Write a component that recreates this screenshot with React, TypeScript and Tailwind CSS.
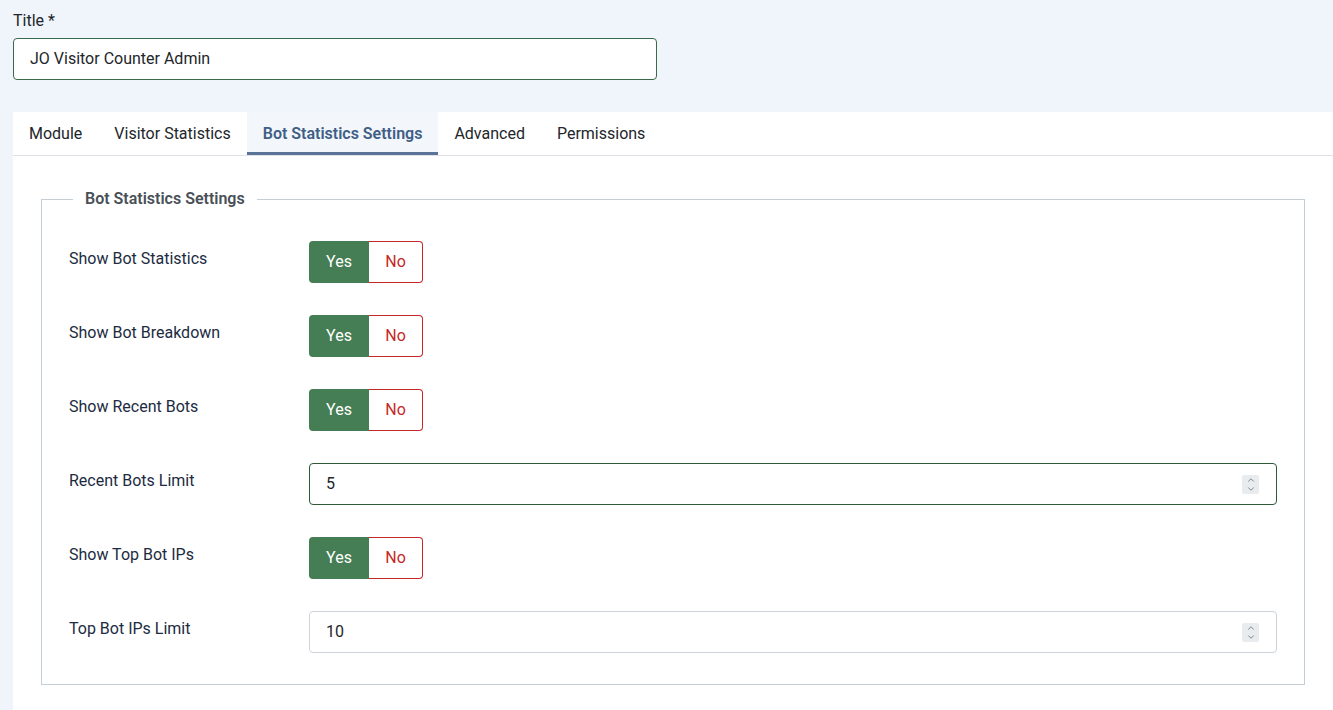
import { ChevronUp, ChevronDown } from 'lucide-react';

type Row =
  | { kind: 'switch'; label: string }
  | { kind: 'number'; label: string; value: string; focused?: boolean };

const rows: Row[] = [
  { kind: 'switch', label: 'Show Bot Statistics' },
  { kind: 'switch', label: 'Show Bot Breakdown' },
  { kind: 'switch', label: 'Show Recent Bots' },
  { kind: 'number', label: 'Recent Bots Limit', value: '5', focused: true },
  { kind: 'switch', label: 'Show Top Bot IPs' },
  { kind: 'number', label: 'Top Bot IPs Limit', value: '10' },
];

const tabs = ['Module', 'Visitor Statistics', 'Bot Statistics Settings', 'Advanced', 'Permissions'];

function YesNo() {
  return (
    <div className="flex h-[42px]">
      <div className="flex w-[60px] items-center justify-center rounded-l-[4px] bg-[#457d54] text-white">Yes</div>
      <div className="flex w-[54px] items-center justify-center rounded-r-[4px] border border-l-0 border-[#c52827] bg-white text-[#c52827]">
        No
      </div>
    </div>
  );
}

function NumberInput({ value, focused }: { value: string; focused?: boolean }) {
  return (
    <div
      className={`flex h-[42px] flex-1 items-center justify-between rounded-[4px] border bg-white pl-4 pr-[17px] ${
        focused ? 'border-[#2f5a3a]' : 'border-[#cdd3d9]'
      }`}
    >
      <span className="text-[#22262a]">{value}</span>
      <div className="flex h-[19px] w-[17px] flex-col items-center justify-center rounded-[2px] bg-[#e9ecef] text-[#6b7178]">
        <ChevronUp size={10} strokeWidth={2} className="-mb-[1px]" />
        <ChevronDown size={10} strokeWidth={2} />
      </div>
    </div>
  );
}

export default function App() {
  return (
    <div className="min-h-[710px] bg-[#f0f4fb] font-['Roboto',sans-serif] text-[16px] text-[#22262a]">
      <div className="px-[13px] pt-[9px]">
        <label className="block leading-6">Title *</label>
        <div className="mt-[5px] flex h-[42px] w-[644px] items-center rounded-[4px] border border-[#3b6a48] bg-white px-4">
          JO Visitor Counter Admin
        </div>
      </div>

      <div className="ml-[13px] mt-[32px] bg-white">
        <div className="flex h-[44px] border-b border-[#dfe3e7]">
          {tabs.map((t) => {
            const active = t === 'Bot Statistics Settings';
            return (
              <div
                key={t}
                className={`flex items-center px-4 ${
                  active
                    ? 'border-b-[3px] border-[#5a7396] bg-[#f3f6fa] pt-[3px] font-semibold text-[#3f5f86]'
                    : 'text-[#22262a]'
                }`}
              >
                {t}
              </div>
            );
          })}
        </div>

        <div className="pl-[28px] pr-[28px] pb-[26px] pt-[31px]">
          <fieldset className="border border-[#c3ced6] px-[27px] pb-[31px]">
            <legend className="ml-[4px] px-3 font-semibold leading-6 text-[#495057]">Bot Statistics Settings</legend>
            <div className="mt-[30px] flex flex-col gap-8">
              {rows.map((r) => (
                <div key={r.label} className="flex items-start">
                  <div className="w-[240px] pt-[6px] leading-6 text-[#1c2b3f]">{r.label}</div>
                  {r.kind === 'switch' ? <YesNo /> : <NumberInput value={r.value} focused={r.focused} />}
                </div>
              ))}
            </div>
          </fieldset>
        </div>
      </div>
    </div>
  );
}
